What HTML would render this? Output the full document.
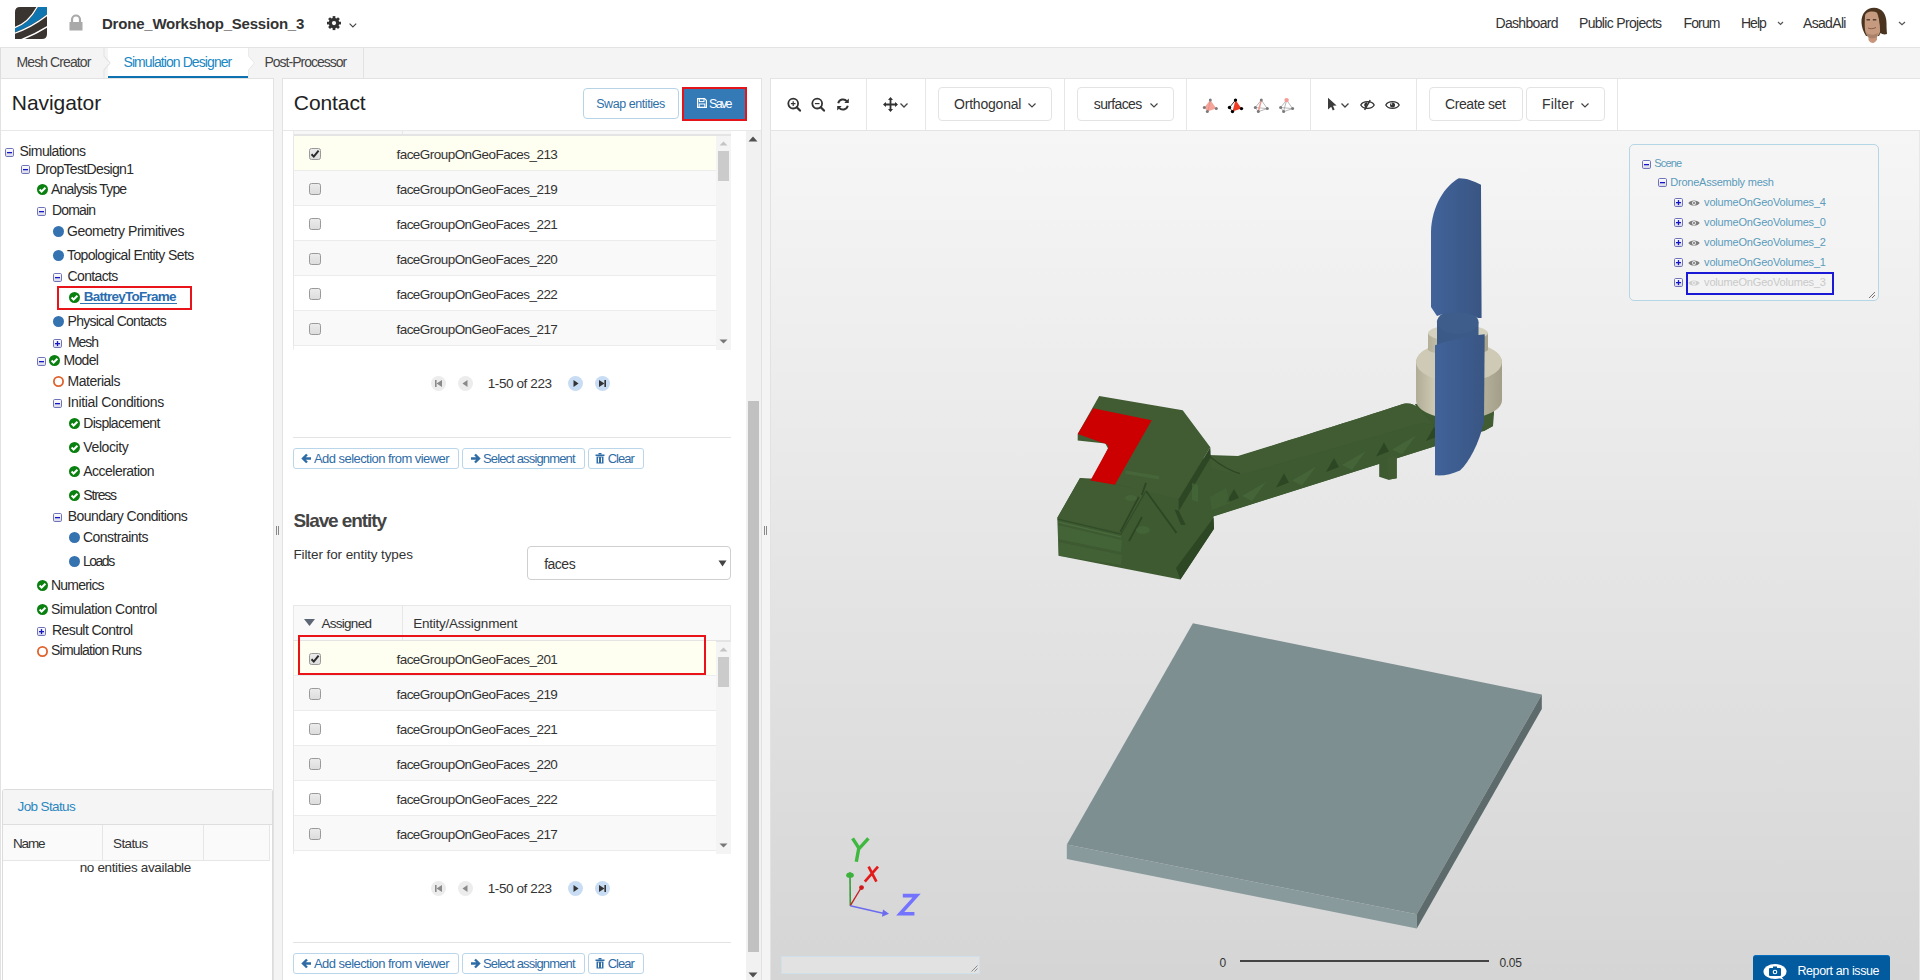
<!DOCTYPE html>
<html><head><meta charset="utf-8"><title>SimScale</title>
<style>
html,body{margin:0;padding:0;width:1920px;height:980px;overflow:hidden;background:#f4f4f4;font-family:"Liberation Sans",sans-serif;}
.a{position:absolute;box-sizing:border-box;}
.t{position:absolute;white-space:nowrap;line-height:1;font-family:"Liberation Sans",sans-serif;}
svg{position:absolute;overflow:visible;}

</style></head><body>
<div class="a" style="left:0px;top:0px;width:1920px;height:47px;background:#fff;"></div><div class="a" style="left:0px;top:47px;width:1920px;height:1px;background:#e3e3e3;"></div><svg style="left:15px;top:7px" width="32" height="32" viewBox="0 0 32 32">
<defs><clipPath id="lc"><path d="M5 0 H32 V27 Q32 32 27 32 H0 V5 Q0 0 5 0Z"/></clipPath></defs>
<g clip-path="url(#lc)">
<rect width="32" height="32" fill="#3a3430"/>
<path d="M23.5 -0.5 Q14 17 -0.5 21.5 L-0.5 25.4 Q16 19.5 32.5 6.8 L32.5 -0.5Z" fill="#0e75b0"/>
<path d="M22.6 -0.8 Q13.4 16.4 -0.8 20.7" fill="none" stroke="#fff" stroke-width="1.3"/>
<path d="M32.8 7.8 Q16.5 20.6 -0.8 26.4" fill="none" stroke="#fff" stroke-width="1.4"/>
<path d="M32.8 19.4 Q20 27.5 6 32.8" fill="none" stroke="#fff" stroke-width="1.4"/>
</g></svg><svg style="left:69px;top:14px" width="14" height="17" viewBox="0 0 14 17">
<path d="M3 8 V5.5 A4 4 0 0 1 11 5.5 V8" fill="none" stroke="#a9a9a9" stroke-width="2.2"/>
<rect x="0.5" y="8" width="13" height="8.5" fill="#a9a9a9"/></svg><div class="t " style="left:102.00px;top:16.20px;font-size:15px;color:#333;font-weight:700;letter-spacing:-0.217px;">Drone_Workshop_Session_3</div><svg style="left:326px;top:15px" width="16" height="16" viewBox="-8 -8 16 16"><g transform="translate(0,0.1)">
<circle r="5.3" fill="#333"/><rect x="-1.35" y="-7" width="2.7" height="3" transform="rotate(0)" fill="#333"/><rect x="-1.35" y="-7" width="2.7" height="3" transform="rotate(45)" fill="#333"/><rect x="-1.35" y="-7" width="2.7" height="3" transform="rotate(90)" fill="#333"/><rect x="-1.35" y="-7" width="2.7" height="3" transform="rotate(135)" fill="#333"/><rect x="-1.35" y="-7" width="2.7" height="3" transform="rotate(180)" fill="#333"/><rect x="-1.35" y="-7" width="2.7" height="3" transform="rotate(225)" fill="#333"/><rect x="-1.35" y="-7" width="2.7" height="3" transform="rotate(270)" fill="#333"/><rect x="-1.35" y="-7" width="2.7" height="3" transform="rotate(315)" fill="#333"/><circle r="2.1" fill="#fff"/></g></svg><svg style="left:349px;top:22.5px" width="8" height="5" viewBox="0 0 8 5"><path d="M0.6 0.6 L3.9 4 L7.2 0.6" fill="none" stroke="#444" stroke-width="1.1"/></svg><div class="t " style="left:1495.50px;top:16.15px;font-size:14px;color:#333;letter-spacing:-0.688px;">Dashboard</div><div class="t " style="left:1579.00px;top:16.15px;font-size:14px;color:#333;letter-spacing:-0.679px;">Public Projects</div><div class="t " style="left:1683.50px;top:16.15px;font-size:14px;color:#333;letter-spacing:-0.875px;">Forum</div><div class="t " style="left:1741.00px;top:16.15px;font-size:14px;color:#333;letter-spacing:-1.000px;">Help</div><svg style="left:1777px;top:21px" width="7" height="5" viewBox="0 0 7 5"><path d="M1 1 L3.5 3.5 L6 1" fill="none" stroke="#555" stroke-width="1.2"/></svg><div class="t " style="left:1803.00px;top:16.15px;font-size:14px;color:#333;letter-spacing:-0.667px;">AsadAli</div><svg style="left:1855px;top:3px" width="40" height="42" viewBox="0 0 40 42">
<path d="M6.5 20 C6 10 12 4.6 19 4.7 C27 4.8 31.5 11 31.5 20 C31.5 25 31.8 28 32 31 C29 32 27 31 25.5 30 L24 33 L11 33 C8 28 6.8 24 6.5 20Z" fill="#4a3420"/>
<path d="M22 36.5 C21 38.5 19 40 18 40 C16 40 14.5 39 13.5 37 L13.5 31 L22 31Z" fill="#c8957a"/>
<path d="M10 14 C10 10 13 8.6 17.5 8.6 C21 8.6 23 10 23.5 13 C25 20 25.6 26 25 29 C23.5 33 21 35.6 17.5 35.6 C13.5 35.6 11 32 10.2 28 C9.6 24 9.6 18 10 14Z" fill="#c69a7e"/>
<path d="M22 10 C24 14 25 20 25 27 L27 30 C27 22 26 14 22 10Z" fill="#4a3420"/>
<rect x="11.5" y="16.2" width="3.5" height="1.2" fill="#3a2a20"/><rect x="17.8" y="16.2" width="3.5" height="1.2" fill="#3a2a20"/>
<path d="M13 25 C15 26 18 26 21 24.5" stroke="#8a5a48" stroke-width="1" fill="none"/>
<path d="M11 29 C13 32 18 33 23 30 L22 34 C19 36 14 36 12 33Z" fill="#8d6a55" opacity="0.5"/>
</svg><svg style="left:1898px;top:21px" width="8" height="5" viewBox="0 0 8 5"><path d="M1 1 L4 3.8 L7 1" fill="none" stroke="#555" stroke-width="1.2"/></svg><div class="a" style="left:0px;top:48px;width:1920px;height:30px;background:#f4f4f4;"></div><div class="a" style="left:0px;top:48px;width:1px;height:30px;background:#ddd;"></div><div class="a" style="left:108px;top:48px;width:140px;height:30px;background:#fff;"></div><div class="a" style="left:363px;top:48px;width:1px;height:30px;background:#e2e2e2;"></div><svg style="left:104px;top:48px" width="12" height="30" viewBox="0 0 12 30"><path d="M0 0 L0 8 L6 15 L0 22 L0 30" fill="none" stroke="#e4e4e4" stroke-width="1.2"/></svg><svg style="left:244px;top:48px" width="12" height="30" viewBox="0 0 12 30"><path d="M4 0 L4 8 L10 15 L4 22 L4 30" fill="none" stroke="#e4e4e4" stroke-width="1.2"/><path d="M0 0 H4 V8 L10 15 L4 22 V30 H0Z" fill="#fff"/></svg><div class="a" style="left:108px;top:76px;width:140px;height:2px;background:#0e72b1;"></div><div class="t " style="left:16.50px;top:55.15px;font-size:14px;color:#444;letter-spacing:-0.909px;">Mesh Creator</div><div class="t " style="left:123.50px;top:55.15px;font-size:14px;color:#1a87c3;letter-spacing:-0.917px;">Simulation Designer</div><div class="t " style="left:264.50px;top:55.15px;font-size:14px;color:#444;letter-spacing:-1.000px;">Post-Processor</div><div class="a" style="left:0px;top:78px;width:274px;height:902px;background:#fff;border:1px solid #e2e2e2;border-bottom:none;"></div><div class="t " style="left:11.80px;top:91.82px;font-size:21px;color:#222;letter-spacing:-0.062px;">Navigator</div><div class="a" style="left:1px;top:130px;width:272px;height:1px;background:#e8e8e8;"></div><div class="a" style="left:282px;top:78px;width:480px;height:902px;background:#fff;border:1px solid #e2e2e2;border-bottom:none;"></div><div class="t " style="left:293.80px;top:91.82px;font-size:21px;color:#222;letter-spacing:-0.083px;">Contact</div><div class="a" style="left:283px;top:130px;width:478px;height:1px;background:#e8e8e8;"></div><div class="a" style="left:770px;top:78px;width:1150px;height:902px;background:linear-gradient(#f8f8f8,#d5d5d5);border-left:1px solid #e2e2e2;"></div><div class="a" style="left:771px;top:78px;width:1149px;height:53px;background:#fff;border-top:1px solid #e4e4e4;border-bottom:1px solid #e4e4e4;"></div><svg style="left:5px;top:148px" width="9" height="9" viewBox="0 0 9 9"><defs><linearGradient id="bg5_148" x1="0" y1="0" x2="0" y2="1"><stop offset="0" stop-color="#fff"/><stop offset="1" stop-color="#d8d8e8"/></linearGradient></defs><rect x="0.5" y="0.5" width="8" height="8" rx="1.2" fill="url(#bg5_148)" stroke="#6f74b8" stroke-width="1"/><rect x="2" y="4" width="5" height="1.3" fill="#1515c8"/></svg><div class="t " style="left:19.60px;top:143.55px;font-size:14px;color:#2a2a2a;letter-spacing:-0.600px;">Simulations</div><svg style="left:21px;top:165px" width="9" height="9" viewBox="0 0 9 9"><defs><linearGradient id="bg21_165" x1="0" y1="0" x2="0" y2="1"><stop offset="0" stop-color="#fff"/><stop offset="1" stop-color="#d8d8e8"/></linearGradient></defs><rect x="0.5" y="0.5" width="8" height="8" rx="1.2" fill="url(#bg21_165)" stroke="#6f74b8" stroke-width="1"/><rect x="2" y="4" width="5" height="1.3" fill="#1515c8"/></svg><div class="t " style="left:35.80px;top:161.55px;font-size:14px;color:#2a2a2a;letter-spacing:-0.657px;">DropTestDesign1</div><svg style="left:37px;top:184px" width="11" height="11" viewBox="0 0 11 11"><circle cx="5.5" cy="5.5" r="5.5" fill="#0a8010"/><path d="M2.6 5.5 L4.6 7.5 L8.4 3.7" fill="none" stroke="#fff" stroke-width="2"/></svg><div class="t " style="left:51.00px;top:181.95px;font-size:14px;color:#2a2a2a;letter-spacing:-0.833px;">Analysis Type</div><svg style="left:37px;top:207px" width="9" height="9" viewBox="0 0 9 9"><defs><linearGradient id="bg37_207" x1="0" y1="0" x2="0" y2="1"><stop offset="0" stop-color="#fff"/><stop offset="1" stop-color="#d8d8e8"/></linearGradient></defs><rect x="0.5" y="0.5" width="8" height="8" rx="1.2" fill="url(#bg37_207)" stroke="#6f74b8" stroke-width="1"/><rect x="2" y="4" width="5" height="1.3" fill="#1515c8"/></svg><div class="t " style="left:52.00px;top:203.15px;font-size:14px;color:#2a2a2a;letter-spacing:-0.840px;">Domain</div><svg style="left:53px;top:226px" width="11" height="11" viewBox="0 0 11 11"><circle cx="5.5" cy="5.5" r="5.5" fill="#3572b0"/></svg><div class="t " style="left:67.00px;top:223.55px;font-size:14px;color:#2a2a2a;letter-spacing:-0.478px;">Geometry Primitives</div><svg style="left:53px;top:250px" width="11" height="11" viewBox="0 0 11 11"><circle cx="5.5" cy="5.5" r="5.5" fill="#3572b0"/></svg><div class="t " style="left:67.00px;top:247.55px;font-size:14px;color:#2a2a2a;letter-spacing:-0.623px;">Topological Entity Sets</div><svg style="left:53px;top:273px" width="9" height="9" viewBox="0 0 9 9"><defs><linearGradient id="bg53_273" x1="0" y1="0" x2="0" y2="1"><stop offset="0" stop-color="#fff"/><stop offset="1" stop-color="#d8d8e8"/></linearGradient></defs><rect x="0.5" y="0.5" width="8" height="8" rx="1.2" fill="url(#bg53_273)" stroke="#6f74b8" stroke-width="1"/><rect x="2" y="4" width="5" height="1.3" fill="#1515c8"/></svg><div class="t " style="left:67.60px;top:269.15px;font-size:14px;color:#2a2a2a;letter-spacing:-0.657px;">Contacts</div><div class="a" style="left:57px;top:286px;width:135px;height:24px;border:2px solid #e8141a;"></div><svg style="left:69px;top:292px" width="11" height="11" viewBox="0 0 11 11"><circle cx="5.5" cy="5.5" r="5.5" fill="#0a8010"/><path d="M2.6 5.5 L4.6 7.5 L8.4 3.7" fill="none" stroke="#fff" stroke-width="2"/></svg><div class="t " style="left:83.80px;top:289.97px;font-size:13.5px;color:#2a6db0;font-weight:700;letter-spacing:-0.754px;">BattreyToFrame</div><div class="a" style="left:80px;top:303px;width:97px;height:1px;background:#2f72b4;"></div><svg style="left:53px;top:316px" width="11" height="11" viewBox="0 0 11 11"><circle cx="5.5" cy="5.5" r="5.5" fill="#3572b0"/></svg><div class="t " style="left:67.60px;top:314.25px;font-size:14px;color:#2a2a2a;letter-spacing:-0.763px;">Physical Contacts</div><svg style="left:53px;top:339px" width="9" height="9" viewBox="0 0 9 9"><defs><linearGradient id="bg53_339" x1="0" y1="0" x2="0" y2="1"><stop offset="0" stop-color="#fff"/><stop offset="1" stop-color="#d8d8e8"/></linearGradient></defs><rect x="0.5" y="0.5" width="8" height="8" rx="1.2" fill="url(#bg53_339)" stroke="#6f74b8" stroke-width="1"/><rect x="2" y="4" width="5" height="1.3" fill="#1515c8"/><rect x="3.85" y="2.1" width="1.3" height="5" fill="#1515c8"/></svg><div class="t " style="left:68.00px;top:335.15px;font-size:14px;color:#2a2a2a;letter-spacing:-1.067px;">Mesh</div><svg style="left:37px;top:357px" width="9" height="9" viewBox="0 0 9 9"><defs><linearGradient id="bg37_357" x1="0" y1="0" x2="0" y2="1"><stop offset="0" stop-color="#fff"/><stop offset="1" stop-color="#d8d8e8"/></linearGradient></defs><rect x="0.5" y="0.5" width="8" height="8" rx="1.2" fill="url(#bg37_357)" stroke="#6f74b8" stroke-width="1"/><rect x="2" y="4" width="5" height="1.3" fill="#1515c8"/></svg><svg style="left:49px;top:355px" width="11" height="11" viewBox="0 0 11 11"><circle cx="5.5" cy="5.5" r="5.5" fill="#0a8010"/><path d="M2.6 5.5 L4.6 7.5 L8.4 3.7" fill="none" stroke="#fff" stroke-width="2"/></svg><div class="t " style="left:63.40px;top:353.35px;font-size:14px;color:#2a2a2a;letter-spacing:-0.650px;">Model</div><svg style="left:53px;top:376px" width="11" height="11" viewBox="0 0 11 11"><circle cx="5.5" cy="5.5" r="4.6" fill="none" stroke="#e0632e" stroke-width="1.8"/></svg><div class="t " style="left:67.60px;top:373.85px;font-size:14px;color:#2a2a2a;letter-spacing:-0.487px;">Materials</div><svg style="left:53px;top:399px" width="9" height="9" viewBox="0 0 9 9"><defs><linearGradient id="bg53_399" x1="0" y1="0" x2="0" y2="1"><stop offset="0" stop-color="#fff"/><stop offset="1" stop-color="#d8d8e8"/></linearGradient></defs><rect x="0.5" y="0.5" width="8" height="8" rx="1.2" fill="url(#bg53_399)" stroke="#6f74b8" stroke-width="1"/><rect x="2" y="4" width="5" height="1.3" fill="#1515c8"/></svg><div class="t " style="left:67.60px;top:395.15px;font-size:14px;color:#2a2a2a;letter-spacing:-0.359px;">Initial Conditions</div><svg style="left:69px;top:418px" width="11" height="11" viewBox="0 0 11 11"><circle cx="5.5" cy="5.5" r="5.5" fill="#0a8010"/><path d="M2.6 5.5 L4.6 7.5 L8.4 3.7" fill="none" stroke="#fff" stroke-width="2"/></svg><div class="t " style="left:83.30px;top:416.35px;font-size:14px;color:#2a2a2a;letter-spacing:-0.709px;">Displacement</div><svg style="left:69px;top:442px" width="11" height="11" viewBox="0 0 11 11"><circle cx="5.5" cy="5.5" r="5.5" fill="#0a8010"/><path d="M2.6 5.5 L4.6 7.5 L8.4 3.7" fill="none" stroke="#fff" stroke-width="2"/></svg><div class="t " style="left:83.30px;top:440.25px;font-size:14px;color:#2a2a2a;letter-spacing:-0.386px;">Velocity</div><svg style="left:69px;top:466px" width="11" height="11" viewBox="0 0 11 11"><circle cx="5.5" cy="5.5" r="5.5" fill="#0a8010"/><path d="M2.6 5.5 L4.6 7.5 L8.4 3.7" fill="none" stroke="#fff" stroke-width="2"/></svg><div class="t " style="left:83.30px;top:464.05px;font-size:14px;color:#2a2a2a;letter-spacing:-0.527px;">Acceleration</div><svg style="left:69px;top:490px" width="11" height="11" viewBox="0 0 11 11"><circle cx="5.5" cy="5.5" r="5.5" fill="#0a8010"/><path d="M2.6 5.5 L4.6 7.5 L8.4 3.7" fill="none" stroke="#fff" stroke-width="2"/></svg><div class="t " style="left:83.30px;top:487.95px;font-size:14px;color:#2a2a2a;letter-spacing:-1.180px;">Stress</div><svg style="left:53px;top:513px" width="9" height="9" viewBox="0 0 9 9"><defs><linearGradient id="bg53_513" x1="0" y1="0" x2="0" y2="1"><stop offset="0" stop-color="#fff"/><stop offset="1" stop-color="#d8d8e8"/></linearGradient></defs><rect x="0.5" y="0.5" width="8" height="8" rx="1.2" fill="url(#bg53_513)" stroke="#6f74b8" stroke-width="1"/><rect x="2" y="4" width="5" height="1.3" fill="#1515c8"/></svg><div class="t " style="left:67.80px;top:509.05px;font-size:14px;color:#2a2a2a;letter-spacing:-0.556px;">Boundary Conditions</div><svg style="left:69px;top:532px" width="11" height="11" viewBox="0 0 11 11"><circle cx="5.5" cy="5.5" r="5.5" fill="#3572b0"/></svg><div class="t " style="left:83.00px;top:529.75px;font-size:14px;color:#2a2a2a;letter-spacing:-0.540px;">Constraints</div><svg style="left:69px;top:556px" width="11" height="11" viewBox="0 0 11 11"><circle cx="5.5" cy="5.5" r="5.5" fill="#3572b0"/></svg><div class="t " style="left:83.00px;top:553.95px;font-size:14px;color:#2a2a2a;letter-spacing:-1.500px;">Loads</div><svg style="left:37px;top:580px" width="11" height="11" viewBox="0 0 11 11"><circle cx="5.5" cy="5.5" r="5.5" fill="#0a8010"/><path d="M2.6 5.5 L4.6 7.5 L8.4 3.7" fill="none" stroke="#fff" stroke-width="2"/></svg><div class="t " style="left:51.00px;top:577.55px;font-size:14px;color:#2a2a2a;letter-spacing:-0.786px;">Numerics</div><svg style="left:37px;top:604px" width="11" height="11" viewBox="0 0 11 11"><circle cx="5.5" cy="5.5" r="5.5" fill="#0a8010"/><path d="M2.6 5.5 L4.6 7.5 L8.4 3.7" fill="none" stroke="#fff" stroke-width="2"/></svg><div class="t " style="left:51.00px;top:601.55px;font-size:14px;color:#2a2a2a;letter-spacing:-0.471px;">Simulation Control</div><svg style="left:37px;top:627px" width="9" height="9" viewBox="0 0 9 9"><defs><linearGradient id="bg37_627" x1="0" y1="0" x2="0" y2="1"><stop offset="0" stop-color="#fff"/><stop offset="1" stop-color="#d8d8e8"/></linearGradient></defs><rect x="0.5" y="0.5" width="8" height="8" rx="1.2" fill="url(#bg37_627)" stroke="#6f74b8" stroke-width="1"/><rect x="2" y="4" width="5" height="1.3" fill="#1515c8"/><rect x="3.85" y="2.1" width="1.3" height="5" fill="#1515c8"/></svg><div class="t " style="left:52.00px;top:622.55px;font-size:14px;color:#2a2a2a;letter-spacing:-0.577px;">Result Control</div><svg style="left:37px;top:646px" width="11" height="11" viewBox="0 0 11 11"><circle cx="5.5" cy="5.5" r="4.6" fill="none" stroke="#e0632e" stroke-width="1.8"/></svg><div class="t " style="left:51.00px;top:643.45px;font-size:14px;color:#2a2a2a;letter-spacing:-0.786px;">Simulation Runs</div><svg style="left:276px;top:526px" width="3" height="9" viewBox="0 0 3 9"><rect x="0" y="0" width="1" height="9" fill="#888"/><rect x="2" y="0" width="1" height="9" fill="#888"/></svg><svg style="left:764px;top:526px" width="3" height="9" viewBox="0 0 3 9"><rect x="0" y="0" width="1" height="9" fill="#888"/><rect x="2" y="0" width="1" height="9" fill="#888"/></svg><div class="a" style="left:2px;top:789px;width:271px;height:191px;background:#fff;border:1px solid #dcdcdc;border-bottom:none;border-radius:3px 3px 0 0;"></div><div class="a" style="left:3px;top:790px;width:269px;height:35px;background:#f5f5f5;border-bottom:1px solid #dedede;"></div><div class="t " style="left:17.50px;top:800.17px;font-size:13.5px;color:#2b87c0;letter-spacing:-0.622px;">Job Status</div><div class="a" style="left:3px;top:825px;width:267px;height:36px;background:#fafafa;border-bottom:1px solid #e6e6e6;"></div><div class="a" style="left:102px;top:825px;width:1px;height:36px;background:#e6e6e6;"></div><div class="a" style="left:203px;top:825px;width:1px;height:36px;background:#e6e6e6;"></div><div class="a" style="left:269px;top:825px;width:1px;height:36px;background:#e6e6e6;"></div><div class="t " style="left:13.00px;top:836.57px;font-size:13.5px;color:#333;letter-spacing:-1.167px;">Name</div><div class="t " style="left:113.00px;top:836.57px;font-size:13.5px;color:#333;letter-spacing:-0.600px;">Status</div><div class="t " style="left:79.70px;top:860.87px;font-size:13.5px;color:#333;letter-spacing:-0.350px;">no entities available</div><div class="a" style="left:583px;top:88px;width:96px;height:31px;border:1px solid #b6d4e6;border-radius:4px;background:#fff;"></div><div class="t " style="left:596.20px;top:98.22px;font-size:12.5px;color:#2f6fa8;letter-spacing:-0.433px;">Swap entities</div><div class="a" style="left:682px;top:87px;width:65px;height:34px;background:#e4141b;"></div><div class="a" style="left:684px;top:89px;width:61px;height:30px;background:#337ab7;"></div><svg style="left:697px;top:98px" width="10" height="10" viewBox="0 0 10 10"><path d="M0.6 0.6 H7.6 L9.4 2.4 V9.4 H0.6Z" fill="none" stroke="#fff" stroke-width="1.2"/><rect x="2.4" y="0.6" width="4.6" height="3" fill="none" stroke="#fff" stroke-width="1"/><rect x="2.2" y="6" width="5.6" height="3.4" fill="none" stroke="#fff" stroke-width="1"/></svg><div class="t " style="left:709.00px;top:98.22px;font-size:12.5px;color:#fff;letter-spacing:-1.667px;">Save</div><div class="a" style="left:746px;top:131px;width:15px;height:849px;background:#f1f1f1;"></div><div class="a" style="left:748px;top:401px;width:11px;height:551px;background:#c1c1c1;"></div><svg style="left:748px;top:136px" width="10" height="6" viewBox="0 0 10 6"><path d="M0.5 5.5 L5 0.5 L9.5 5.5Z" fill="#505050"/></svg><svg style="left:748px;top:972px" width="10" height="6" viewBox="0 0 10 6"><path d="M0.5 0.5 L5 5.5 L9.5 0.5Z" fill="#505050"/></svg><div class="a" style="left:293px;top:131px;width:438px;height:5px;background:#f7f7f7;border-bottom:2px solid #e4e4e4;border-left:1px solid #e6e6e6;"></div><div class="a" style="left:402px;top:131px;width:1px;height:5px;background:#e6e6e6;"></div><div class="a" style="left:293px;top:131px;width:1px;height:219px;background:#ececec;"></div><div class="a" style="left:293px;top:136px;width:423px;height:35px;background:#fefef1;border-bottom:1px solid #ececec;border-left:1px solid #e6e6e6;"></div><svg style="left:309px;top:148px" width="12" height="12" viewBox="0 0 12 12"><defs><linearGradient id="cg148" x1="0" y1="0" x2="0" y2="1"><stop offset="0" stop-color="#ececec"/><stop offset="1" stop-color="#dcdcdc"/></linearGradient></defs><rect x="0.5" y="0.5" width="11" height="11" rx="2" fill="url(#cg148)" stroke="#9a9a9a" stroke-width="1"/><path d="M2.5 6.2 L4.8 8.6 L9.6 2.6" fill="none" stroke="#2a2a2a" stroke-width="2"/></svg><div class="t " style="left:396.50px;top:147.57px;font-size:13.5px;color:#333;letter-spacing:-0.545px;">faceGroupOnGeoFaces_213</div><div class="a" style="left:293px;top:171px;width:423px;height:35px;background:#f9f9f9;border-bottom:1px solid #ececec;border-left:1px solid #e6e6e6;"></div><svg style="left:309px;top:183px" width="12" height="12" viewBox="0 0 12 12"><defs><linearGradient id="cg183" x1="0" y1="0" x2="0" y2="1"><stop offset="0" stop-color="#ececec"/><stop offset="1" stop-color="#dcdcdc"/></linearGradient></defs><rect x="0.5" y="0.5" width="11" height="11" rx="2" fill="url(#cg183)" stroke="#9a9a9a" stroke-width="1"/></svg><div class="t " style="left:396.50px;top:182.57px;font-size:13.5px;color:#333;letter-spacing:-0.545px;">faceGroupOnGeoFaces_219</div><div class="a" style="left:293px;top:206px;width:423px;height:35px;background:#fff;border-bottom:1px solid #ececec;border-left:1px solid #e6e6e6;"></div><svg style="left:309px;top:218px" width="12" height="12" viewBox="0 0 12 12"><defs><linearGradient id="cg218" x1="0" y1="0" x2="0" y2="1"><stop offset="0" stop-color="#ececec"/><stop offset="1" stop-color="#dcdcdc"/></linearGradient></defs><rect x="0.5" y="0.5" width="11" height="11" rx="2" fill="url(#cg218)" stroke="#9a9a9a" stroke-width="1"/></svg><div class="t " style="left:396.50px;top:217.57px;font-size:13.5px;color:#333;letter-spacing:-0.545px;">faceGroupOnGeoFaces_221</div><div class="a" style="left:293px;top:241px;width:423px;height:35px;background:#f9f9f9;border-bottom:1px solid #ececec;border-left:1px solid #e6e6e6;"></div><svg style="left:309px;top:253px" width="12" height="12" viewBox="0 0 12 12"><defs><linearGradient id="cg253" x1="0" y1="0" x2="0" y2="1"><stop offset="0" stop-color="#ececec"/><stop offset="1" stop-color="#dcdcdc"/></linearGradient></defs><rect x="0.5" y="0.5" width="11" height="11" rx="2" fill="url(#cg253)" stroke="#9a9a9a" stroke-width="1"/></svg><div class="t " style="left:396.50px;top:252.57px;font-size:13.5px;color:#333;letter-spacing:-0.545px;">faceGroupOnGeoFaces_220</div><div class="a" style="left:293px;top:276px;width:423px;height:35px;background:#fff;border-bottom:1px solid #ececec;border-left:1px solid #e6e6e6;"></div><svg style="left:309px;top:288px" width="12" height="12" viewBox="0 0 12 12"><defs><linearGradient id="cg288" x1="0" y1="0" x2="0" y2="1"><stop offset="0" stop-color="#ececec"/><stop offset="1" stop-color="#dcdcdc"/></linearGradient></defs><rect x="0.5" y="0.5" width="11" height="11" rx="2" fill="url(#cg288)" stroke="#9a9a9a" stroke-width="1"/></svg><div class="t " style="left:396.50px;top:287.57px;font-size:13.5px;color:#333;letter-spacing:-0.545px;">faceGroupOnGeoFaces_222</div><div class="a" style="left:293px;top:311px;width:423px;height:35px;background:#f9f9f9;border-bottom:1px solid #ececec;border-left:1px solid #e6e6e6;"></div><svg style="left:309px;top:323px" width="12" height="12" viewBox="0 0 12 12"><defs><linearGradient id="cg323" x1="0" y1="0" x2="0" y2="1"><stop offset="0" stop-color="#ececec"/><stop offset="1" stop-color="#dcdcdc"/></linearGradient></defs><rect x="0.5" y="0.5" width="11" height="11" rx="2" fill="url(#cg323)" stroke="#9a9a9a" stroke-width="1"/></svg><div class="t " style="left:396.50px;top:322.57px;font-size:13.5px;color:#333;letter-spacing:-0.545px;">faceGroupOnGeoFaces_217</div><div class="a" style="left:716px;top:136px;width:15px;height:214px;background:#f4f4f4;"></div><svg style="left:719px;top:141px" width="9" height="5" viewBox="0 0 9 5"><path d="M0.5 4.5 L4.5 0.5 L8.5 4.5Z" fill="#c4c4c4"/></svg><div class="a" style="left:718px;top:151px;width:11px;height:30px;background:#cbcbcb;"></div><svg style="left:719px;top:339px" width="9" height="5" viewBox="0 0 9 5"><path d="M0.5 0.5 L4.5 4.5 L8.5 0.5Z" fill="#777"/></svg><svg style="left:431.0px;top:375.5px" width="15" height="15" viewBox="0 0 15 15"><circle cx="7.5" cy="7.5" r="7.5" fill="#ececec"/><rect x="4" y="4" width="1.6" height="7" fill="#8a8a8a"/><path d="M11 4 V11 L5.5 7.5Z" fill="#8a8a8a"/></svg><svg style="left:457.8px;top:375.5px" width="15" height="15" viewBox="0 0 15 15"><circle cx="7.5" cy="7.5" r="7.5" fill="#ececec"/><path d="M9.5 4 V11 L4.5 7.5Z" fill="#8a8a8a"/></svg><svg style="left:568.0px;top:375.5px" width="15" height="15" viewBox="0 0 15 15"><circle cx="7.5" cy="7.5" r="7.5" fill="#c8dcf4"/><path d="M5.5 4 V11 L10.5 7.5Z" fill="#333"/></svg><svg style="left:594.9px;top:375.5px" width="15" height="15" viewBox="0 0 15 15"><circle cx="7.5" cy="7.5" r="7.5" fill="#c8dcf4"/><rect x="9.4" y="4" width="1.6" height="7" fill="#333"/><path d="M4 4 V11 L9.5 7.5Z" fill="#333"/></svg><div class="t " style="left:487.70px;top:376.57px;font-size:13.5px;color:#333;letter-spacing:-0.400px;">1-50 of 223</div><div class="a" style="left:293px;top:437px;width:438px;height:1px;background:#e3e3e3;"></div><div class="a" style="left:293px;top:448px;width:166px;height:21px;border:1px solid #b9d6ea;border-radius:3px;background:#fff;"></div><div class="a" style="left:462px;top:448px;width:123px;height:21px;border:1px solid #b9d6ea;border-radius:3px;background:#fff;"></div><div class="a" style="left:588px;top:448px;width:56px;height:21px;border:1px solid #b9d6ea;border-radius:3px;background:#fff;"></div><svg style="left:301px;top:453px" width="11" height="11" viewBox="0 0 11 11"><path d="M10 5.5 H2.5 M6 1.5 L2 5.5 L6 9.5" fill="none" stroke="#2f6ca6" stroke-width="2.4"/></svg><div class="t " style="left:314.00px;top:451.80px;font-size:13px;color:#2f6ca6;letter-spacing:-0.554px;">Add selection from viewer</div><svg style="left:470px;top:453px" width="11" height="11" viewBox="0 0 11 11"><path d="M1 5.5 H8.5 M5 1.5 L9 5.5 L5 9.5" fill="none" stroke="#2f6ca6" stroke-width="2.4"/></svg><div class="t " style="left:483.00px;top:451.80px;font-size:13px;color:#2f6ca6;letter-spacing:-0.856px;">Select assignment</div><svg style="left:595px;top:453px" width="10" height="11" viewBox="0 0 10 11"><rect x="0.5" y="1.5" width="9" height="1.5" fill="#2f6ca6"/><rect x="3.5" y="0" width="3" height="1.5" fill="#2f6ca6"/><path d="M1.5 3.5 H8.5 V10.5 H1.5Z" fill="#2f6ca6"/><rect x="3" y="4.5" width="1" height="5" fill="#fff"/><rect x="6" y="4.5" width="1" height="5" fill="#fff"/></svg><div class="t " style="left:607.70px;top:451.80px;font-size:13px;color:#2f6ca6;letter-spacing:-1.000px;">Clear</div><div class="t " style="left:293.40px;top:510.92px;font-size:19px;color:#444;font-weight:700;letter-spacing:-1.091px;">Slave entity</div><div class="t " style="left:293.40px;top:548.07px;font-size:13.5px;color:#333;letter-spacing:-0.091px;">Filter for entity types</div><div class="a" style="left:527px;top:546px;width:204px;height:34px;border:1px solid #cfcfcf;border-radius:4px;background:#fff;"></div><div class="t " style="left:544.20px;top:556.55px;font-size:14px;color:#333;letter-spacing:-0.500px;">faces</div><svg style="left:718px;top:560px" width="9" height="7" viewBox="0 0 9 7"><path d="M0.5 0.5 H8.5 L4.5 6.5Z" fill="#444"/></svg><div class="a" style="left:293px;top:605px;width:438px;height:37px;background:#f9f9f9;border:1px solid #e8e8e8;border-bottom:2px solid #e4e4e4;"></div><div class="a" style="left:402px;top:606px;width:1px;height:34px;background:#e6e6e6;"></div><svg style="left:304px;top:619px" width="11" height="7" viewBox="0 0 11 7"><path d="M0 0 H11 L5.5 7Z" fill="#5c6675"/></svg><div class="t " style="left:321.40px;top:616.77px;font-size:13.5px;color:#333;letter-spacing:-0.714px;">Assigned</div><div class="t " style="left:413.20px;top:616.77px;font-size:13.5px;color:#333;letter-spacing:-0.237px;">Entity/Assignment</div><div class="a" style="left:293px;top:642px;width:1px;height:212px;background:#ececec;"></div><div class="a" style="left:293px;top:641px;width:423px;height:35px;background:#fefef1;border-bottom:1px solid #ececec;border-left:1px solid #e6e6e6;"></div><svg style="left:309px;top:653px" width="12" height="12" viewBox="0 0 12 12"><defs><linearGradient id="cg653" x1="0" y1="0" x2="0" y2="1"><stop offset="0" stop-color="#ececec"/><stop offset="1" stop-color="#dcdcdc"/></linearGradient></defs><rect x="0.5" y="0.5" width="11" height="11" rx="2" fill="url(#cg653)" stroke="#9a9a9a" stroke-width="1"/><path d="M2.5 6.2 L4.8 8.6 L9.6 2.6" fill="none" stroke="#2a2a2a" stroke-width="2"/></svg><div class="t " style="left:396.50px;top:652.57px;font-size:13.5px;color:#333;letter-spacing:-0.545px;">faceGroupOnGeoFaces_201</div><div class="a" style="left:293px;top:676px;width:423px;height:35px;background:#f9f9f9;border-bottom:1px solid #ececec;border-left:1px solid #e6e6e6;"></div><svg style="left:309px;top:688px" width="12" height="12" viewBox="0 0 12 12"><defs><linearGradient id="cg688" x1="0" y1="0" x2="0" y2="1"><stop offset="0" stop-color="#ececec"/><stop offset="1" stop-color="#dcdcdc"/></linearGradient></defs><rect x="0.5" y="0.5" width="11" height="11" rx="2" fill="url(#cg688)" stroke="#9a9a9a" stroke-width="1"/></svg><div class="t " style="left:396.50px;top:687.57px;font-size:13.5px;color:#333;letter-spacing:-0.545px;">faceGroupOnGeoFaces_219</div><div class="a" style="left:293px;top:711px;width:423px;height:35px;background:#fff;border-bottom:1px solid #ececec;border-left:1px solid #e6e6e6;"></div><svg style="left:309px;top:723px" width="12" height="12" viewBox="0 0 12 12"><defs><linearGradient id="cg723" x1="0" y1="0" x2="0" y2="1"><stop offset="0" stop-color="#ececec"/><stop offset="1" stop-color="#dcdcdc"/></linearGradient></defs><rect x="0.5" y="0.5" width="11" height="11" rx="2" fill="url(#cg723)" stroke="#9a9a9a" stroke-width="1"/></svg><div class="t " style="left:396.50px;top:722.57px;font-size:13.5px;color:#333;letter-spacing:-0.545px;">faceGroupOnGeoFaces_221</div><div class="a" style="left:293px;top:746px;width:423px;height:35px;background:#f9f9f9;border-bottom:1px solid #ececec;border-left:1px solid #e6e6e6;"></div><svg style="left:309px;top:758px" width="12" height="12" viewBox="0 0 12 12"><defs><linearGradient id="cg758" x1="0" y1="0" x2="0" y2="1"><stop offset="0" stop-color="#ececec"/><stop offset="1" stop-color="#dcdcdc"/></linearGradient></defs><rect x="0.5" y="0.5" width="11" height="11" rx="2" fill="url(#cg758)" stroke="#9a9a9a" stroke-width="1"/></svg><div class="t " style="left:396.50px;top:757.57px;font-size:13.5px;color:#333;letter-spacing:-0.545px;">faceGroupOnGeoFaces_220</div><div class="a" style="left:293px;top:781px;width:423px;height:35px;background:#fff;border-bottom:1px solid #ececec;border-left:1px solid #e6e6e6;"></div><svg style="left:309px;top:793px" width="12" height="12" viewBox="0 0 12 12"><defs><linearGradient id="cg793" x1="0" y1="0" x2="0" y2="1"><stop offset="0" stop-color="#ececec"/><stop offset="1" stop-color="#dcdcdc"/></linearGradient></defs><rect x="0.5" y="0.5" width="11" height="11" rx="2" fill="url(#cg793)" stroke="#9a9a9a" stroke-width="1"/></svg><div class="t " style="left:396.50px;top:792.57px;font-size:13.5px;color:#333;letter-spacing:-0.545px;">faceGroupOnGeoFaces_222</div><div class="a" style="left:293px;top:816px;width:423px;height:35px;background:#f9f9f9;border-bottom:1px solid #ececec;border-left:1px solid #e6e6e6;"></div><svg style="left:309px;top:828px" width="12" height="12" viewBox="0 0 12 12"><defs><linearGradient id="cg828" x1="0" y1="0" x2="0" y2="1"><stop offset="0" stop-color="#ececec"/><stop offset="1" stop-color="#dcdcdc"/></linearGradient></defs><rect x="0.5" y="0.5" width="11" height="11" rx="2" fill="url(#cg828)" stroke="#9a9a9a" stroke-width="1"/></svg><div class="t " style="left:396.50px;top:827.57px;font-size:13.5px;color:#333;letter-spacing:-0.545px;">faceGroupOnGeoFaces_217</div><div class="a" style="left:716px;top:642px;width:15px;height:212px;background:#f4f4f4;"></div><svg style="left:719px;top:647px" width="9" height="5" viewBox="0 0 9 5"><path d="M0.5 4.5 L4.5 0.5 L8.5 4.5Z" fill="#c4c4c4"/></svg><div class="a" style="left:718px;top:657px;width:11px;height:30px;background:#cbcbcb;"></div><svg style="left:719px;top:843px" width="9" height="5" viewBox="0 0 9 5"><path d="M0.5 0.5 L4.5 4.5 L8.5 0.5Z" fill="#777"/></svg><div class="a" style="left:298px;top:635px;width:408px;height:40px;border:2px solid #e8141a;"></div><svg style="left:431.0px;top:880.5px" width="15" height="15" viewBox="0 0 15 15"><circle cx="7.5" cy="7.5" r="7.5" fill="#ececec"/><rect x="4" y="4" width="1.6" height="7" fill="#8a8a8a"/><path d="M11 4 V11 L5.5 7.5Z" fill="#8a8a8a"/></svg><svg style="left:457.8px;top:880.5px" width="15" height="15" viewBox="0 0 15 15"><circle cx="7.5" cy="7.5" r="7.5" fill="#ececec"/><path d="M9.5 4 V11 L4.5 7.5Z" fill="#8a8a8a"/></svg><svg style="left:568.0px;top:880.5px" width="15" height="15" viewBox="0 0 15 15"><circle cx="7.5" cy="7.5" r="7.5" fill="#c8dcf4"/><path d="M5.5 4 V11 L10.5 7.5Z" fill="#333"/></svg><svg style="left:594.9px;top:880.5px" width="15" height="15" viewBox="0 0 15 15"><circle cx="7.5" cy="7.5" r="7.5" fill="#c8dcf4"/><rect x="9.4" y="4" width="1.6" height="7" fill="#333"/><path d="M4 4 V11 L9.5 7.5Z" fill="#333"/></svg><div class="t " style="left:487.70px;top:881.57px;font-size:13.5px;color:#333;letter-spacing:-0.400px;">1-50 of 223</div><div class="a" style="left:293px;top:942px;width:438px;height:1px;background:#e3e3e3;"></div><div class="a" style="left:293px;top:953px;width:166px;height:21px;border:1px solid #b9d6ea;border-radius:3px;background:#fff;"></div><div class="a" style="left:462px;top:953px;width:123px;height:21px;border:1px solid #b9d6ea;border-radius:3px;background:#fff;"></div><div class="a" style="left:588px;top:953px;width:56px;height:21px;border:1px solid #b9d6ea;border-radius:3px;background:#fff;"></div><svg style="left:301px;top:958px" width="11" height="11" viewBox="0 0 11 11"><path d="M10 5.5 H2.5 M6 1.5 L2 5.5 L6 9.5" fill="none" stroke="#2f6ca6" stroke-width="2.4"/></svg><div class="t " style="left:314.00px;top:956.80px;font-size:13px;color:#2f6ca6;letter-spacing:-0.554px;">Add selection from viewer</div><svg style="left:470px;top:958px" width="11" height="11" viewBox="0 0 11 11"><path d="M1 5.5 H8.5 M5 1.5 L9 5.5 L5 9.5" fill="none" stroke="#2f6ca6" stroke-width="2.4"/></svg><div class="t " style="left:483.00px;top:956.80px;font-size:13px;color:#2f6ca6;letter-spacing:-0.856px;">Select assignment</div><svg style="left:595px;top:958px" width="10" height="11" viewBox="0 0 10 11"><rect x="0.5" y="1.5" width="9" height="1.5" fill="#2f6ca6"/><rect x="3.5" y="0" width="3" height="1.5" fill="#2f6ca6"/><path d="M1.5 3.5 H8.5 V10.5 H1.5Z" fill="#2f6ca6"/><rect x="3" y="4.5" width="1" height="5" fill="#fff"/><rect x="6" y="4.5" width="1" height="5" fill="#fff"/></svg><div class="t " style="left:607.70px;top:956.80px;font-size:13px;color:#2f6ca6;letter-spacing:-1.000px;">Clear</div><div class="a" style="left:866px;top:79px;width:1px;height:51px;background:#e6e6e6;"></div><div class="a" style="left:925px;top:79px;width:1px;height:51px;background:#e6e6e6;"></div><div class="a" style="left:1064px;top:79px;width:1px;height:51px;background:#e6e6e6;"></div><div class="a" style="left:1186px;top:79px;width:1px;height:51px;background:#e6e6e6;"></div><div class="a" style="left:1310px;top:79px;width:1px;height:51px;background:#e6e6e6;"></div><div class="a" style="left:1416px;top:79px;width:1px;height:51px;background:#e6e6e6;"></div><div class="a" style="left:1617px;top:79px;width:1px;height:51px;background:#e6e6e6;"></div><svg style="left:786px;top:97px" width="16" height="16" viewBox="0 0 16 16">
<circle cx="7.2" cy="6.6" r="4.9" fill="none" stroke="#333" stroke-width="1.8"/><path d="M10.7 10.2 L14 13.6" stroke="#333" stroke-width="2.2" stroke-linecap="round"/>
<path d="M7.2 4.3 V8.9 M4.9 6.6 H9.5" stroke="#333" stroke-width="1.2"/></svg><svg style="left:810px;top:97px" width="16" height="16" viewBox="0 0 16 16">
<circle cx="7.2" cy="6.6" r="4.9" fill="none" stroke="#333" stroke-width="1.8"/><path d="M10.7 10.2 L14 13.6" stroke="#333" stroke-width="2.2" stroke-linecap="round"/>
<path d="M4.9 6.6 H9.5" stroke="#333" stroke-width="1.2"/></svg><svg style="left:836px;top:98px" width="14" height="13" viewBox="0 0 14 13">
<path d="M2.2 5.2 A5 5 0 0 1 11 3.4" fill="none" stroke="#333" stroke-width="1.9"/><path d="M12.8 0.5 V5 H8.3Z" fill="#333"/>
<path d="M11.8 7.8 A5 5 0 0 1 3 9.6" fill="none" stroke="#333" stroke-width="1.9"/><path d="M1.2 12.5 V8 H5.7Z" fill="#333"/></svg><svg style="left:883px;top:97px" width="15" height="15" viewBox="0 0 15 15">
<path d="M7.5 1.5 V13.5 M1.5 7.5 H13.5" stroke="#333" stroke-width="1.8"/>
<path d="M7.5 0 L10 3 H5Z M7.5 15 L10 12 H5Z M0 7.5 L3 5 V10Z M15 7.5 L12 5 V10Z" fill="#333"/></svg><svg style="left:900px;top:102.5px" width="8" height="5" viewBox="0 0 8 5"><path d="M0.5 0.5 L4.0 4 L7.5 0.5" fill="none" stroke="#444" stroke-width="1.3"/></svg><div class="a" style="left:938px;top:87px;width:114px;height:34px;border:1px solid #e3e3e3;border-radius:4px;background:#fff;"></div><div class="t " style="left:954.00px;top:97.35px;font-size:14px;color:#333;letter-spacing:-0.200px;">Orthogonal</div><svg style="left:1028.3px;top:102.8px" width="8" height="5" viewBox="0 0 8 5"><path d="M0.5 0.5 L4.0 4 L7.5 0.5" fill="none" stroke="#444" stroke-width="1.2"/></svg><div class="a" style="left:1077px;top:87px;width:97px;height:34px;border:1px solid #e3e3e3;border-radius:4px;background:#fff;"></div><div class="t " style="left:1093.80px;top:97.35px;font-size:14px;color:#333;letter-spacing:-0.643px;">surfaces</div><svg style="left:1150px;top:102.8px" width="8" height="5" viewBox="0 0 8 5"><path d="M0.5 0.5 L4.0 4 L7.5 0.5" fill="none" stroke="#444" stroke-width="1.2"/></svg><svg style="left:0px;top:0px" width="1920" height="200" viewBox="0 0 1920 200"><polygon points="1210.3,100.1 1204.3,107.5 1207.3,111.6 1216.3,108.6" fill="#f4a49a"/><path d="M1210.3 100.1 L1207.8999999999999 111.6" stroke="#e58a80" stroke-width="0.8"/><circle cx="1210.3" cy="100.1" r="1.5" fill="#7a7a7a"/><circle cx="1204.3" cy="107.5" r="1.5" fill="#7a7a7a"/><circle cx="1207.3" cy="111.6" r="1.5" fill="#7a7a7a"/><circle cx="1216.3" cy="108.6" r="1.5" fill="#7a7a7a"/></svg><svg style="left:0px;top:0px" width="1920" height="200" viewBox="0 0 1920 200"><path d="M1235.5 100.1 L1229.5 107.5 L1232.5 111.6" fill="none" stroke="#222" stroke-width="0.9"/><polygon points="1235.5,100.1 1232.5,111.6 1241.5,108.6" fill="#ee3a22"/><circle cx="1235.5" cy="100.1" r="1.7" fill="#000"/><circle cx="1229.5" cy="107.5" r="1.7" fill="#000"/><circle cx="1232.5" cy="111.6" r="1.7" fill="#000"/><circle cx="1241.5" cy="108.6" r="1.7" fill="#000"/></svg><svg style="left:0px;top:0px" width="1920" height="200" viewBox="0 0 1920 200"><path d="M1261.3 100.1 L1255.3 107.5 L1258.3 111.6 L1267.3 108.6 Z M1255.3 107.5 L1267.3 108.6" fill="none" stroke="#888" stroke-width="0.6"/><path d="M1261.3 100.1 L1258.3 111.6" stroke="#f29a90" stroke-width="1.6"/><circle cx="1261.3" cy="100.1" r="1.5" fill="#7a7a7a"/><circle cx="1255.3" cy="107.5" r="1.5" fill="#7a7a7a"/><circle cx="1258.3" cy="111.6" r="1.5" fill="#7a7a7a"/><circle cx="1267.3" cy="108.6" r="1.5" fill="#7a7a7a"/></svg><svg style="left:0px;top:0px" width="1920" height="200" viewBox="0 0 1920 200"><path d="M1286.6 100.1 L1280.6 107.5 L1283.6 111.6 L1292.6 108.6 Z M1280.6 107.5 L1292.6 108.6 M1286.6 100.1 L1283.6 111.6" fill="none" stroke="#888" stroke-width="0.6"/><circle cx="1286.6" cy="100.1" r="2.2" fill="#f59c94"/><circle cx="1280.6" cy="107.5" r="1.5" fill="#7a7a7a"/><circle cx="1283.6" cy="111.6" r="1.5" fill="#7a7a7a"/><circle cx="1292.6" cy="108.6" r="1.5" fill="#7a7a7a"/></svg><svg style="left:1327px;top:97px" width="11" height="15" viewBox="0 0 11 15"><path d="M1 0.8 L9.6 8.6 L6 8.8 L7.6 12.6 L5.8 13.6 L4.2 9.8 L1 12.6Z" fill="#3c3c3c"/></svg><svg style="left:1340.5px;top:102.6px" width="8" height="5" viewBox="0 0 8 5"><path d="M0.5 0.5 L4.0 4 L7.5 0.5" fill="none" stroke="#444" stroke-width="1.3"/></svg><svg style="left:1360px;top:100px" width="15" height="10" viewBox="0 0 15 10"><path d="M0.8 5 C3 0.6 12 0.6 14.2 5 C12 9.4 3 9.4 0.8 5Z" fill="none" stroke="#333" stroke-width="1.3"/><path d="M7.6 2.5 A2.5 2.5 0 0 0 6 7.3Z" fill="#333"/><path d="M10.2 0.2 L4.6 9.8" stroke="#333" stroke-width="1.5"/></svg><svg style="left:1385px;top:100px" width="15" height="10" viewBox="0 0 15 10"><path d="M0.8 5 C3 0.6 12 0.6 14.2 5 C12 9.4 3 9.4 0.8 5Z" fill="none" stroke="#333" stroke-width="1.3"/><circle cx="7.5" cy="4.9" r="2.5" fill="#333"/><circle cx="6.6" cy="4" r="0.7" fill="#fff"/></svg><div class="a" style="left:1429px;top:87px;width:94px;height:34px;border:1px solid #e3e3e3;border-radius:4px;background:#fff;"></div><div class="t " style="left:1445.00px;top:97.35px;font-size:14px;color:#333;letter-spacing:-0.411px;">Create set</div><div class="a" style="left:1526px;top:87px;width:79px;height:34px;border:1px solid #e3e3e3;border-radius:4px;background:#fff;"></div><div class="t " style="left:1542.00px;top:97.35px;font-size:14px;color:#333;letter-spacing:0.150px;">Filter</div><svg style="left:1581px;top:102.8px" width="8" height="5" viewBox="0 0 8 5"><path d="M0.5 0.5 L4.0 4 L7.5 0.5" fill="none" stroke="#444" stroke-width="1.2"/></svg><div class="a" style="left:1919px;top:131px;width:1px;height:849px;background:#e8e8e8;"></div><svg style="left:0px;top:0px" width="1920" height="980" viewBox="0 0 1920 980"><polygon points="1192.9,623.2 1541.8,694.6 1416.8,914.3 1066.8,844.6" fill="#7e8f91"/><polygon points="1066.8,844.6 1416.8,914.3 1416.8,928.6 1066.8,858.9" fill="#899a9c"/><polygon points="1416.8,914.3 1541.8,694.6 1541.8,708.9 1416.8,928.6" fill="#5d6b6c"/><polygon points="1415.0,404.0 1493.0,398.0 1494.0,413.0 1493.0,426.0 1484.0,431.0 1433.0,447.0 1421.0,424.0" fill="#3d5a31"/><polygon points="1480.0,418.0 1493.0,413.0 1493.0,426.0 1484.0,431.0" fill="#415c33"/><path d="M1208,455 L1238,456 C1300,437 1360,418 1400,405 C1408,402 1414,404 1418,408 L1433,424 L1433.3,446.7 L1211.7,517 Z" fill="#3d5a31"/><path d="M1210,456.7 L1238,456.7 C1300,437 1360,418 1400,405 C1408,402 1414,404 1418,408 L1433,424 L1421.7,423.3 L1240,475 C1228,478 1216,472 1210,468 Z" fill="#415c33"/><polygon points="1210.0,468.0 1240.0,475.0 1421.7,423.3 1433.3,425.0 1433.3,446.7 1211.7,516.7" fill="#3d5a31"/><polygon points="1226.0,503.0 1234.0,489.0 1239.0,498.0" fill="#2d4725"/><polygon points="1242.0,496.0 1266.0,482.0 1252.0,501.0" fill="#486a3c" opacity="0.7"/><polygon points="1276.0,487.5 1284.0,473.5 1289.0,482.5" fill="#2d4725"/><polygon points="1292.0,480.5 1316.0,466.5 1302.0,485.5" fill="#486a3c" opacity="0.7"/><polygon points="1326.0,472.0 1334.0,458.0 1339.0,467.0" fill="#2d4725"/><polygon points="1342.0,465.0 1366.0,451.0 1352.0,470.0" fill="#486a3c" opacity="0.7"/><polygon points="1376.0,456.5 1384.0,442.5 1389.0,451.5" fill="#2d4725"/><polygon points="1392.0,449.5 1416.0,435.5 1402.0,454.5" fill="#486a3c" opacity="0.7"/><polygon points="1426.0,441.0 1434.0,427.0 1439.0,436.0" fill="#2d4725"/><polygon points="1442.0,434.0 1466.0,420.0 1452.0,439.0" fill="#486a3c" opacity="0.7"/><polygon points="1379.2,460.0 1396.7,455.0 1396.7,478.3 1388.3,479.7 1379.2,476.7" fill="#3d5a31"/><polygon points="1387.0,458.0 1396.7,455.0 1396.7,478.3 1388.3,479.7" fill="#415c33"/><polygon points="1080.0,478.0 1120.0,480.0 1175.0,470.0 1210.8,455.6 1213.5,517.8 1214.0,528.8 1180.4,579.6 1058.6,555.7 1057.3,517.8" fill="#3d5a31"/><polygon points="1213.5,517.8 1214.0,528.8 1180.4,579.6 1176.0,568.0" fill="#2d4725"/><polygon points="1080.0,478.0 1146.0,491.0 1123.0,533.0 1057.3,518.0" fill="#415c33"/><polygon points="1058.0,525.0 1122.0,540.0 1121.0,552.0 1058.0,539.0" fill="#486a3c" opacity="0.6"/><polygon points="1058.0,542.0 1122.0,555.0 1121.0,565.0 1058.6,555.7" fill="#486a3c" opacity="0.5"/><polygon points="1099.2,396.1 1182.7,410.2 1210.3,447.2 1178.6,499.2 1115.0,484.0 1092.2,480.0 1108.0,448.6 1105.3,443.4 1077.7,440.6 1077.7,434.1" fill="#415c33"/><polygon points="1210.3,447.2 1210.8,457.3 1180.0,509.0 1178.6,510.4 1178.6,499.2" fill="#2d4725"/><polygon points="1174.5,509.4 1178.6,510.4 1185.7,524.7 1181.0,525.0" fill="#2d4725"/><path d="M1210.7,457.3 C1220,465 1230,471 1240,473.7" stroke="#2d4725" stroke-width="1.2" fill="none"/><polygon points="1125.5,470.6 1159.2,476.0 1159.2,479.5 1125.5,474.0" fill="#486a3c" opacity="0.7"/><path d="M1146,491 L1176.5,532.9 M1138.8,497 L1120.4,531.8 M1146,482.9 L1141.8,495 M1142,517 L1129,541" stroke="#2d4725" stroke-width="1.8" fill="none"/><ellipse cx="1131" cy="498" rx="6" ry="3" fill="#486a3c" opacity="0.6"/><ellipse cx="1143" cy="530" rx="7" ry="4" fill="#486a3c" opacity="0.6"/><polygon points="1192.0,483.0 1198.0,485.0 1198.0,502.0 1192.0,500.0" fill="#486a3c" opacity="0.6"/><polygon points="1210.0,497.0 1226.0,488.0 1230.0,503.0 1212.0,510.0" fill="#486a3c" opacity="0.45"/><path d="M1057.5,519 L1121,534 L1146,491" stroke="#2d4725" stroke-width="1.1" fill="none" opacity="0.8"/><path d="M1058,522 L1121,537" stroke="#486a3c" stroke-width="1.5" fill="none"/><path d="M1093.1,408.3 L1151.7,420.2 L1114.9,484.7 L1090.4,480.4 L1108,448.6 C1109,446 1107,443.5 1103,443 L1077.7,434.1 Z" fill="#cc0000"/><defs><linearGradient id="mot" x1="0" y1="0" x2="1" y2="0"><stop offset="0" stop-color="#b0ac96"/><stop offset="0.2" stop-color="#cbc7b1"/><stop offset="0.6" stop-color="#c2beA8"/><stop offset="1" stop-color="#a29e87"/></linearGradient><linearGradient id="bl" x1="0" y1="0" x2="1" y2="0"><stop offset="0" stop-color="#41639a"/><stop offset="1" stop-color="#395583"/></linearGradient></defs><linearGradient id="ring" x1="0" y1="0" x2="1" y2="0"><stop offset="0" stop-color="#b3af98"/><stop offset="0.3" stop-color="#cdc9b3"/><stop offset="1" stop-color="#a6a28b"/></linearGradient><path d="M1416,363 C1416,350 1440,342 1459,342 C1478,342 1502,350 1502,363 L1502,400 C1502,412 1480,419 1459,419 C1438,419 1416,412 1416,400 Z" fill="url(#mot)"/><ellipse cx="1459" cy="362" rx="43" ry="20" fill="#cfcab5"/><path d="M1428,333 L1428,350 C1432,356 1484,356 1488,350 L1488,333 Z" fill="url(#ring)"/><ellipse cx="1458" cy="333" rx="30" ry="8" fill="#d5d1bf"/><path d="M1437,322 L1478.5,322 L1478.5,346 L1437,348 Z" fill="#3c5a87"/><ellipse cx="1457.7" cy="322" rx="20.8" ry="12" fill="#3e5d8b"/><path d="M1431,307 L1431,232 C1432,205 1445,186 1458.8,178.2 C1466,178 1474,181 1481,184.7 L1481.6,318 L1478,318 C1472,312 1450,310 1437,316 Z" fill="url(#bl)"/><path d="M1435,345.3 C1450,340 1468,336 1484.7,334.3 L1484,421.4 C1479,444 1469,462 1460,470.4 C1452,474 1444,476 1435,475.3 Z" fill="url(#bl)"/></svg><div class="a" style="left:1629px;top:144px;width:250px;height:157px;border:1px solid #b5d6e4;border-radius:5px;background:rgba(245,245,245,0.6);"></div><svg style="left:1642px;top:160px" width="9" height="9" viewBox="0 0 9 9"><defs><linearGradient id="bg1642_160" x1="0" y1="0" x2="0" y2="1"><stop offset="0" stop-color="#fff"/><stop offset="1" stop-color="#d8d8e8"/></linearGradient></defs><rect x="0.5" y="0.5" width="8" height="8" rx="1.2" fill="url(#bg1642_160)" stroke="#6f74b8" stroke-width="1"/><rect x="2" y="4" width="5" height="1.3" fill="#1515c8"/></svg><div class="t " style="left:1654.20px;top:157.59px;font-size:11px;color:#5b9bbb;letter-spacing:-0.800px;">Scene</div><svg style="left:1658px;top:178px" width="9" height="9" viewBox="0 0 9 9"><defs><linearGradient id="bg1658_178" x1="0" y1="0" x2="0" y2="1"><stop offset="0" stop-color="#fff"/><stop offset="1" stop-color="#d8d8e8"/></linearGradient></defs><rect x="0.5" y="0.5" width="8" height="8" rx="1.2" fill="url(#bg1658_178)" stroke="#6f74b8" stroke-width="1"/><rect x="2" y="4" width="5" height="1.3" fill="#1515c8"/></svg><div class="t " style="left:1670.30px;top:176.69px;font-size:11px;color:#5b9bbb;letter-spacing:-0.235px;">DroneAssembly mesh</div><svg style="left:1674px;top:198px" width="9" height="9" viewBox="0 0 9 9"><defs><linearGradient id="bg1674_198" x1="0" y1="0" x2="0" y2="1"><stop offset="0" stop-color="#fff"/><stop offset="1" stop-color="#d8d8e8"/></linearGradient></defs><rect x="0.5" y="0.5" width="8" height="8" rx="1.2" fill="url(#bg1674_198)" stroke="#6f74b8" stroke-width="1"/><rect x="2" y="4" width="5" height="1.3" fill="#1515c8"/><rect x="3.85" y="2.1" width="1.3" height="5" fill="#1515c8"/></svg><svg style="left:1688px;top:199px" width="12" height="8" viewBox="0 0 12 8"><path d="M0.3 4 C2 0.6 10 0.6 11.7 4 C10 7.4 2 7.4 0.3 4Z" fill="#7c7c7c"/><circle cx="6" cy="4" r="2" fill="#f0f0f0"/><circle cx="6" cy="4" r="1.1" fill="#7c7c7c"/></svg><div class="t " style="left:1704.10px;top:196.69px;font-size:11px;color:#5b9bbb;letter-spacing:-0.184px;">volumeOnGeoVolumes_4</div><svg style="left:1674px;top:218px" width="9" height="9" viewBox="0 0 9 9"><defs><linearGradient id="bg1674_218" x1="0" y1="0" x2="0" y2="1"><stop offset="0" stop-color="#fff"/><stop offset="1" stop-color="#d8d8e8"/></linearGradient></defs><rect x="0.5" y="0.5" width="8" height="8" rx="1.2" fill="url(#bg1674_218)" stroke="#6f74b8" stroke-width="1"/><rect x="2" y="4" width="5" height="1.3" fill="#1515c8"/><rect x="3.85" y="2.1" width="1.3" height="5" fill="#1515c8"/></svg><svg style="left:1688px;top:219px" width="12" height="8" viewBox="0 0 12 8"><path d="M0.3 4 C2 0.6 10 0.6 11.7 4 C10 7.4 2 7.4 0.3 4Z" fill="#7c7c7c"/><circle cx="6" cy="4" r="2" fill="#f0f0f0"/><circle cx="6" cy="4" r="1.1" fill="#7c7c7c"/></svg><div class="t " style="left:1704.10px;top:216.69px;font-size:11px;color:#5b9bbb;letter-spacing:-0.184px;">volumeOnGeoVolumes_0</div><svg style="left:1674px;top:238px" width="9" height="9" viewBox="0 0 9 9"><defs><linearGradient id="bg1674_238" x1="0" y1="0" x2="0" y2="1"><stop offset="0" stop-color="#fff"/><stop offset="1" stop-color="#d8d8e8"/></linearGradient></defs><rect x="0.5" y="0.5" width="8" height="8" rx="1.2" fill="url(#bg1674_238)" stroke="#6f74b8" stroke-width="1"/><rect x="2" y="4" width="5" height="1.3" fill="#1515c8"/><rect x="3.85" y="2.1" width="1.3" height="5" fill="#1515c8"/></svg><svg style="left:1688px;top:239px" width="12" height="8" viewBox="0 0 12 8"><path d="M0.3 4 C2 0.6 10 0.6 11.7 4 C10 7.4 2 7.4 0.3 4Z" fill="#7c7c7c"/><circle cx="6" cy="4" r="2" fill="#f0f0f0"/><circle cx="6" cy="4" r="1.1" fill="#7c7c7c"/></svg><div class="t " style="left:1704.10px;top:236.69px;font-size:11px;color:#5b9bbb;letter-spacing:-0.184px;">volumeOnGeoVolumes_2</div><svg style="left:1674px;top:258px" width="9" height="9" viewBox="0 0 9 9"><defs><linearGradient id="bg1674_258" x1="0" y1="0" x2="0" y2="1"><stop offset="0" stop-color="#fff"/><stop offset="1" stop-color="#d8d8e8"/></linearGradient></defs><rect x="0.5" y="0.5" width="8" height="8" rx="1.2" fill="url(#bg1674_258)" stroke="#6f74b8" stroke-width="1"/><rect x="2" y="4" width="5" height="1.3" fill="#1515c8"/><rect x="3.85" y="2.1" width="1.3" height="5" fill="#1515c8"/></svg><svg style="left:1688px;top:259px" width="12" height="8" viewBox="0 0 12 8"><path d="M0.3 4 C2 0.6 10 0.6 11.7 4 C10 7.4 2 7.4 0.3 4Z" fill="#7c7c7c"/><circle cx="6" cy="4" r="2" fill="#f0f0f0"/><circle cx="6" cy="4" r="1.1" fill="#7c7c7c"/></svg><div class="t " style="left:1704.10px;top:256.69px;font-size:11px;color:#5b9bbb;letter-spacing:-0.184px;">volumeOnGeoVolumes_1</div><svg style="left:1674px;top:278px" width="9" height="9" viewBox="0 0 9 9"><defs><linearGradient id="bg1674_278" x1="0" y1="0" x2="0" y2="1"><stop offset="0" stop-color="#fff"/><stop offset="1" stop-color="#d8d8e8"/></linearGradient></defs><rect x="0.5" y="0.5" width="8" height="8" rx="1.2" fill="url(#bg1674_278)" stroke="#6f74b8" stroke-width="1"/><rect x="2" y="4" width="5" height="1.3" fill="#1515c8"/><rect x="3.85" y="2.1" width="1.3" height="5" fill="#1515c8"/></svg><svg style="left:1688px;top:279px" width="12" height="8" viewBox="0 0 12 8"><path d="M0.3 4 C2 0.6 10 0.6 11.7 4 C10 7.4 2 7.4 0.3 4Z" fill="#cfcfcf"/><circle cx="6" cy="4" r="2" fill="#f0f0f0"/><circle cx="6" cy="4" r="1.1" fill="#cfcfcf"/></svg><div class="t " style="left:1704.10px;top:276.69px;font-size:11px;color:#c9c9c9;letter-spacing:-0.184px;">volumeOnGeoVolumes_3</div><div class="a" style="left:1686px;top:272px;width:148px;height:23px;border:2px solid #1a1ad6;"></div><svg style="left:1868px;top:291px" width="8" height="8" viewBox="0 0 8 8"><path d="M1 7 L7 1 M4 7 L7 4" stroke="#555" stroke-width="0.8"/></svg><svg style="left:0px;top:0px" width="1920" height="980" viewBox="0 0 1920 980">
<path d="M850.3,905.7 L850,875" stroke="#3a9a3a" stroke-width="1.6"/>
<ellipse cx="850" cy="875.2" rx="3.8" ry="2.6" fill="#3cb23c"/><path d="M847,875 L850,871.8 L853,875Z" fill="#3cb23c"/>
<path d="M850.3,905.7 L861,888" stroke="#c42020" stroke-width="1.4"/>
<circle cx="861.5" cy="887.6" r="2.4" fill="#d01818"/>
<path d="M850.3,905.7 L884,913.5" stroke="#6b6bf0" stroke-width="1.5"/>
<path d="M883,909.5 L889,913.8 L882,916.8 Z" fill="#6b6bf0"/>
</svg><svg style="left:0px;top:0px" width="1920" height="980" viewBox="0 0 1920 980">
<path d="M852.6,838.3 L859.2,848.6 M868.4,838.3 L858.6,849.2 L856.3,861.8" fill="none" stroke="#3eb83e" stroke-width="3.4" stroke-linejoin="miter"/>
<path d="M868.6,866.6 L876.4,881.6 M878,866.6 L864.8,881.6" fill="none" stroke="#e31b1b" stroke-width="2.7"/>
<path d="M902.8,895.6 L916.6,895.6 L900.2,913.8 L914.4,913.8" fill="none" stroke="#7373ff" stroke-width="3.6" stroke-linejoin="miter"/>
</svg><div class="a" style="left:781px;top:956px;width:199px;height:18px;border:1px solid #cfe0ea;background:#e2e2e2;"></div><svg style="left:971px;top:965px" width="7" height="7" viewBox="0 0 7 7"><path d="M0.5 6.5 L6.5 0.5 M3.5 6.5 L6.5 3.5" stroke="#777" stroke-width="0.8"/></svg><div class="t " style="left:1219.50px;top:956.54px;font-size:12px;color:#333;">0</div><div class="a" style="left:1240px;top:960px;width:249px;height:2px;background:#444;"></div><div class="t " style="left:1499.50px;top:956.54px;font-size:12px;color:#333;letter-spacing:-0.333px;">0.05</div><div class="a" style="left:1753px;top:955px;width:137px;height:25px;background:#035b9f;border-radius:3px 3px 0 0;border-top:1px solid #0a6ec0;"></div><svg style="left:1763px;top:963px" width="25" height="17" viewBox="0 0 25 17"><ellipse cx="12" cy="8.5" rx="11.5" ry="7.5" fill="#fff"/><path d="M14 14 L21 17 L17 12Z" fill="#fff"/>
<rect x="6" y="5" width="12" height="8" rx="1" fill="#035b9f"/><rect x="10" y="3.5" width="4" height="2" fill="#035b9f"/><circle cx="12" cy="9" r="2.3" fill="#fff"/><circle cx="12" cy="9" r="1.2" fill="#035b9f"/></svg><div class="t " style="left:1797.40px;top:965.42px;font-size:12.5px;color:#fff;letter-spacing:-0.386px;">Report an issue</div>
</body></html>
